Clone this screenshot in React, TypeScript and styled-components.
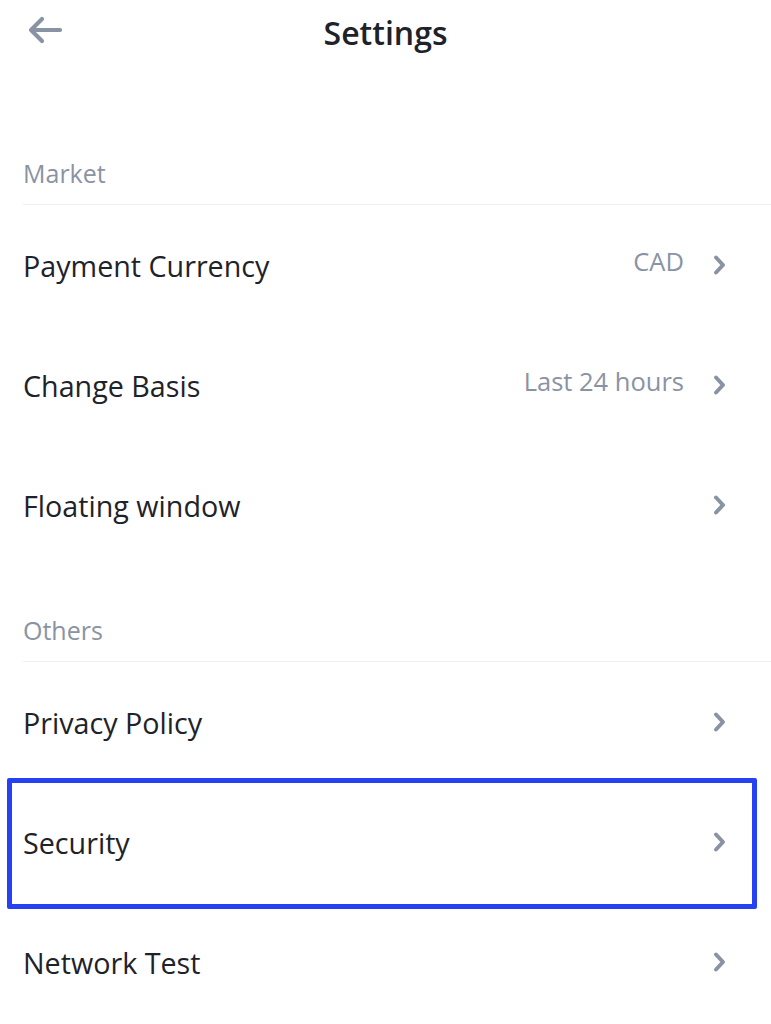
import React from 'react';
import styled, { createGlobalStyle } from 'styled-components';

const GlobalStyle = createGlobalStyle`
  html, body {
    margin: 0;
    padding: 0;
    background: #fff;
  }
  body {
    font-family: 'Open Sans', 'Noto Sans', sans-serif;
    color: #1e2329;
  }
`;

const Page = styled.div`
  width: 771px;
  min-height: 1024px;
  background: #fff;
`;

const Header = styled.div`
  position: relative;
  display: flex;
  align-items: center;
  justify-content: center;
  height: 64px;
`;

const BackBtn = styled.button`
  position: absolute;
  left: 24px;
  top: 10px;
  width: 42px;
  height: 40px;
  padding: 0;
  border: none;
  background: none;
  display: flex;
  align-items: center;
  justify-content: center;
  cursor: pointer;
`;

const Title = styled.h1`
  margin: 0;
  font-size: 32px;
  font-weight: 600;
  color: #1e2329;
`;

interface SectionProps { first?: boolean };
const SectionHeader = styled.div`
  margin: 0 0 0 23px;
  padding: ${(p: SectionProps) => p.first ? '94px' : '50px'} 0 15px;
  font-size: 25px;
  line-height: 31px;
  color: #8a93a3;
  border-bottom: 1px solid #eef0f2;
`;

interface RowProps { highlighted?: boolean };
const Row = styled.div`
  position: relative;
  display: flex;
  align-items: center;
  height: 120px;
  padding: 0 43px 0 23px;

  &::after {
    content: '';
    display: ${(p: RowProps) => p.highlighted ? 'block' : 'none'};
    position: absolute;
    left: 7px;
    right: 14px;
    top: -4px;
    bottom: -7px;
    border: 5px solid #2541f2;
    border-radius: 2px;
    pointer-events: none;
  }
`;

const Label = styled.span`
  flex: 1;
  font-size: 28.7px;
  color: #1e2329;
`;

const Value = styled.span`
  font-size: 25.5px;
  color: #8a93a3;
  margin-right: 28px;
  margin-top: -8px;
`;

const Chevron = () => (
  <svg width="16" height="22" viewBox="0 0 16 22">
    <path d="M4 3.5 L11 11 L4 18.5" fill="none" stroke="#8a93a3" strokeWidth="4" strokeLinecap="round" strokeLinejoin="round" />
  </svg>
);

const BackArrow = () => (
  <svg width="36" height="28" viewBox="0 0 36 28">
    <path d="M33 14 H5 M15 3 L4 14 L15 25" fill="none" stroke="#8a93a3" strokeWidth="4.2" strokeLinecap="round" strokeLinejoin="round" />
  </svg>
);

interface Item { label: string; value?: string; highlighted?: boolean };
interface Section { title: string; items: Item[] };

const sections: Section[] = [
  {
    title: 'Market',
    items: [
      { label: 'Payment Currency', value: 'CAD' },
      { label: 'Change Basis', value: 'Last 24 hours' },
      { label: 'Floating window' },
    ],
  },
  {
    title: 'Others',
    items: [
      { label: 'Privacy Policy' },
      { label: 'Security', highlighted: true },
      { label: 'Network Test' },
    ],
  },
];

const App = () => (
  <Page>
    <GlobalStyle />
    <Header>
      <BackBtn aria-label="Back"><BackArrow /></BackBtn>
      <Title>Settings</Title>
    </Header>

    {sections.map((section, i) => (
      <div key={section.title}>
        <SectionHeader first={i === 0}>{section.title}</SectionHeader>
        {section.items.map(item => (
          <Row key={item.label} highlighted={item.highlighted}>
            <Label>{item.label}</Label>
            {item.value && <Value>{item.value}</Value>}
            <Chevron />
          </Row>
        ))}
      </div>
    ))}
  </Page>
);

export default App;
